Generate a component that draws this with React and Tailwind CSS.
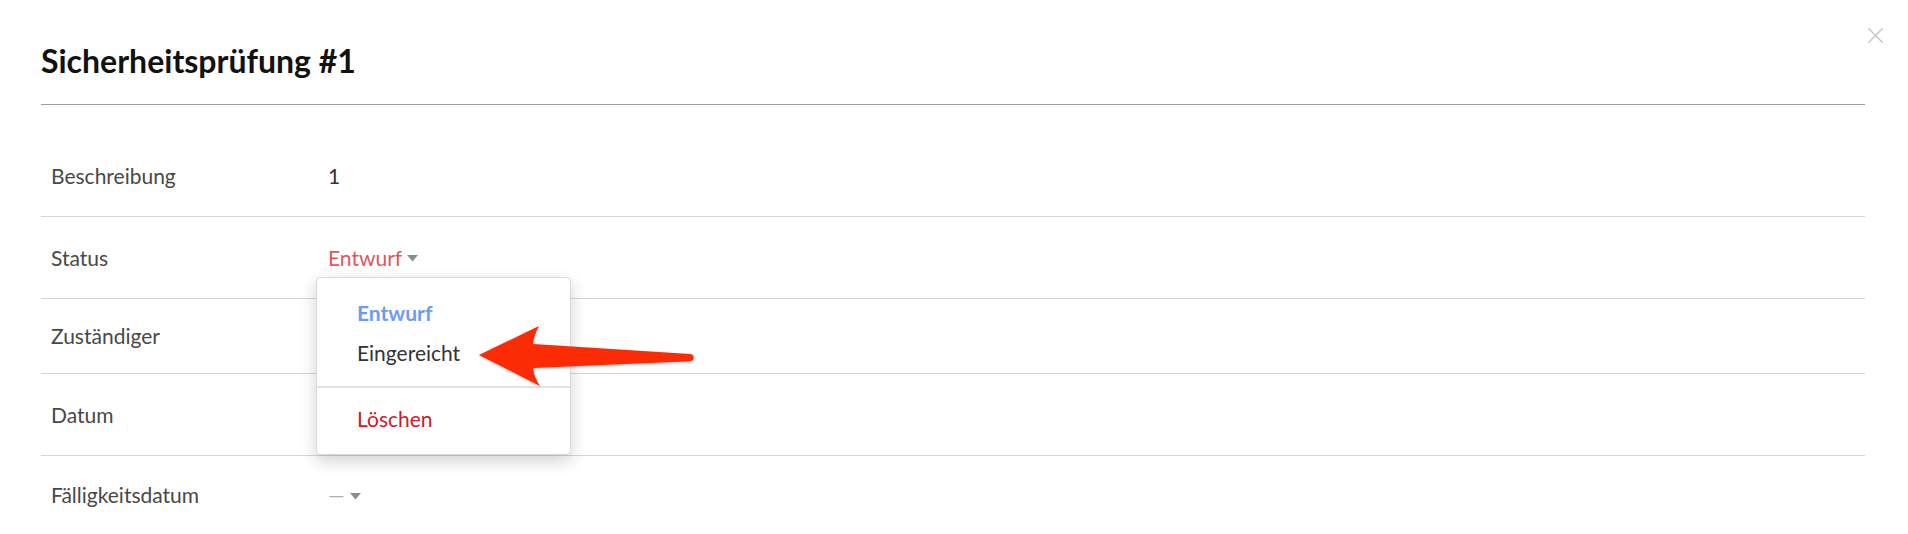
import { X } from 'lucide-react';

const rows = [
  { label: 'Beschreibung', h: 'h-[81px]', value: <span className="text-[#333]">1</span> },
  {
    label: 'Status',
    h: 'h-[82px]',
    value: (
      <span className="flex items-center text-[#e5545a]">
        Entwurf
        <Caret />
      </span>
    ),
  },
  { label: 'Zuständiger', h: 'h-[75px]', value: null },
  { label: 'Datum', h: 'h-[82px]', value: null },
  {
    label: 'Fälligkeitsdatum',
    h: 'h-[78px]',
    value: (
      <span className="flex items-center text-[#b0b0b0]">
        —
        <Caret />
      </span>
    ),
    last: true,
  },
];

function Caret() {
  return (
    <svg width="11" height="7" viewBox="0 0 11 7" className="ml-[5px] mt-[2px]">
      <path d="M0 0 H11 L5.5 6.5 Z" fill="#8c8c8c" />
    </svg>
  );
}

function StatusMenu() {
  return (
    <div className="absolute left-[316px] top-[277px] w-[255px] h-[178px] rounded-[4px] border border-[#d9d9d9] bg-white shadow-[0_6px_16px_rgba(0,0,0,0.18)] pt-[15px] text-[21px]">
      <div className="pl-[40px] leading-[40px] font-bold text-[#6b9bf2]">Entwurf</div>
      <div className="pl-[40px] leading-[40px] text-[#333]">Eingereicht</div>
      <div className="mt-[13px] h-[2px] bg-[#e2e2e2]" />
      <div className="mt-[11px] pl-[40px] leading-[40px] text-[#d0192a]">Löschen</div>
    </div>
  );
}

function Arrow() {
  return (
    <svg
      width="232"
      height="72"
      viewBox="0 0 232 72"
      className="absolute left-[470px] top-[320px] pointer-events-none drop-shadow-[0_1px_1px_rgba(0,0,0,0.25)]"
    >
      <path
        d="M9 35 L69 6 Q64 15 63 24 L220 34 A3.6 3.6 0 0 1 220 41.2 L63 48 Q64 57 70 66 Z"
        fill="#fb2b06"
      />
    </svg>
  );
}

export default function App() {
  return (
    <div className="relative w-[1908px] h-[534px] overflow-hidden bg-white font-['Lato',sans-serif]">
      <button className="absolute left-[1862px] top-[22px] text-[#c4c4c4]">
        <X size={27} strokeWidth={1.2} />
      </button>

      <div className="pl-[41px] pr-[43px]">
        <div className="pt-[41px] pb-[23px] border-b border-[#9e9e9e]">
          <h1 className="text-[32px] leading-[40px] font-bold text-[#111]">Sicherheitsprüfung #1</h1>
        </div>

        <div className="mt-[31px]">
          {rows.map((row) => (
            <div
              key={row.label}
              className={`flex items-center ${row.h} text-[21px] ${row.last ? '' : 'border-b border-[#d6d6d6]'}`}
            >
              <div className="w-[287px] pl-[10px] text-[#484848]">{row.label}</div>
              <div>{row.value}</div>
            </div>
          ))}
        </div>
      </div>

      <StatusMenu />
      <Arrow />
    </div>
  );
}
